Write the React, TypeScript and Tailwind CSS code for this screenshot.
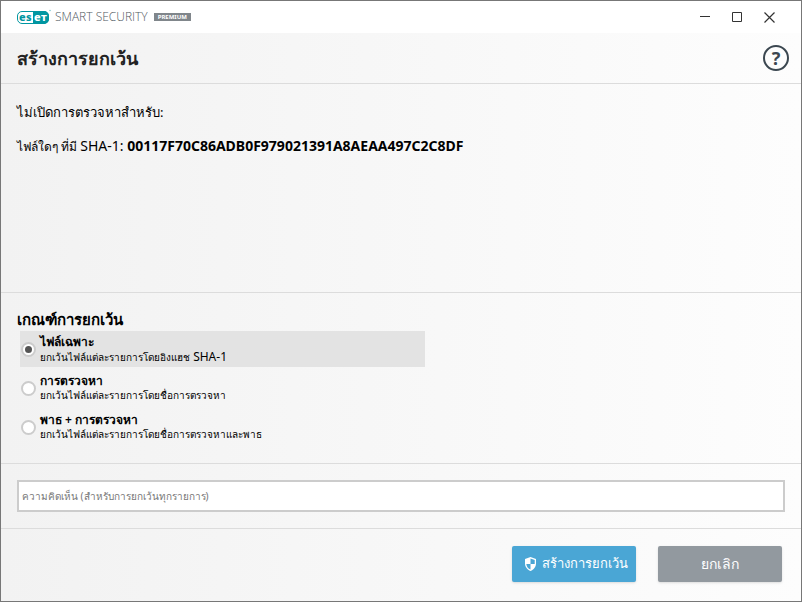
import { useState } from 'react';

const OPTIONS = [
    { id: 'file', title: 'ไฟล์เฉพาะ', text: 'ยกเว้นไฟล์แต่ละรายการโดยอิงแฮช', hash: 'SHA-1' },
    { id: 'detection', title: 'การตรวจหา', text: 'ยกเว้นไฟล์แต่ละรายการโดยชื่อการตรวจหา' },
    { id: 'path', title: 'พาธ + การตรวจหา', text: 'ยกเว้นไฟล์แต่ละรายการโดยชื่อการตรวจหาและพาธ' },
];

function Logo() {
    return (
        <svg width="34" height="16" viewBox="0 0 34 16" aria-label="eset">
            <rect x="0.5" y="2.5" width="31" height="12" rx="4.5" fill="#fff" stroke="#0096a1" />
            <path d="M16 2h11a5 5 0 0 1 5 5v3a5 5 0 0 1-5 5H16z" fill="#0096a1" />
            <text x="2" y="12" fontSize="11" fontWeight="800" fill="#0096a1">e</text>
            <text x="9" y="12" fontSize="11" fontWeight="800" fill="#0096a1">s</text>
            <text x="17" y="12" fontSize="11" fontWeight="800" fill="#fff">e</text>
            <text x="24" y="12" fontSize="11" fontWeight="800" fill="#fff">т</text>
            <circle cx="33" cy="1.5" r="0.8" fill="#7fc8ce" />
        </svg>
    );
}

function ShieldIcon() {
    return (
        <svg width="11" height="14" viewBox="0 0 11 14">
            <path d="M5.5 0 11 2v4.5c0 3.5-2.3 6.2-5.5 7.5C2.3 12.7 0 10 0 6.5V2z" fill="#fff" />
            <path d="M5.5 1.5V7h4.2V2.9zM5.5 7H1.3c.2 2.6 1.9 4.6 4.2 5.6z" fill="#4aa6d5" />
        </svg>
    );
}

function TitleBar() {
    return (
        <header className="flex h-8 shrink-0 items-center bg-white pl-4">
            <Logo />
            <span className="ml-1 font-['Open_Sans',sans-serif] text-xs font-light text-[#4f585e]">SMART SECURITY</span>
            <span className="ml-[6px] bg-[#80868b] px-1 text-[6px] leading-[8px] font-bold text-white">PREMIUM</span>
            <div className="ml-auto flex text-[#333]">
                <button aria-label="Minimize" className="flex h-8 w-8 items-center justify-center">
                    <svg width="10" height="10" stroke="currentColor"><path d="M0 4.5h10" /></svg>
                </button>
                <button aria-label="Maximize" className="flex h-8 w-8 items-center justify-center">
                    <svg width="10" height="10" stroke="currentColor" fill="none"><path d="M.5.5h9v9h-9z" /></svg>
                </button>
                <button aria-label="Close" className="mr-4 flex h-8 w-8 items-center justify-center">
                    <svg width="11" height="11" stroke="currentColor" strokeWidth="1.2"><path d="M.5.5l10 10M10.5.5l-10 10" /></svg>
                </button>
            </div>
        </header>
    );
}

export default function App() {
    const [selected, setSelected] = useState('file');

    return (
        <main className="flex min-h-screen flex-col border border-[#777] bg-linear-to-r from-[#f2f2f2] to-[#fdfdfd] font-['Noto_Sans',sans-serif] text-black">
            <TitleBar />

            <div className="flex h-[51px] shrink-0 items-center justify-between border-b border-[#dcdcdc] pr-3 pl-4">
                <h1 className="text-lg font-bold text-[#222]">สร้างการยกเว้น</h1>
                <button
                    aria-label="Help"
                    className="flex size-[26px] items-center justify-center rounded-full border-2 border-[#3b4750] text-lg leading-none font-bold text-[#3b4750]"
                >
                    ?
                </button>
            </div>

            <section className="flex-1 border-b border-[#dcdcdc] px-4 pt-4">
                <p className="text-[13px] leading-6">ไม่เปิดการตรวจหาสำหรับ:</p>
                <p className="mt-3 text-xs leading-5">
                    ไฟล์ใดๆ ที่มี{' '}
                    <span className="text-sm leading-5">
                        SHA-1: <b>00117F70C86ADB0F979021391A8AEAA497C2C8DF</b>
                    </span>
                </p>
            </section>

            <fieldset className="border-b border-[#dcdcdc] px-4 pt-4 pb-[18px]">
                <legend className="float-left w-full text-[15px] leading-5 font-semibold">เกณฑ์การยกเว้น</legend>
                <div className="clear-both flex w-[408px] max-w-full flex-col gap-[3px] pt-[2px] pl-[3px]">
                    {OPTIONS.map((option) => (
                        <label
                            key={option.id}
                            className="flex h-9 items-center gap-1 pl-px has-checked:bg-[#e3e3e3]"
                        >
                            <input
                                type="radio"
                                name="criteria"
                                checked={selected === option.id}
                                onChange={() => setSelected(option.id)}
                                className="grid size-[15px] appearance-none place-items-center rounded-full border-2 border-[#ccc] bg-white before:size-[7px] before:rounded-full checked:before:bg-[#555]"
                            />
                            <span className="flex flex-col text-[10px] leading-[15px]">
                                <b className="text-xs leading-[15px] font-semibold">{option.title}</b>
                                <span>
                                    {option.text}
                                    {option.hash && <span className="text-xs leading-[15px]"> {option.hash}</span>}
                                </span>
                            </span>
                        </label>
                    ))}
                </div>
            </fieldset>

            <div className="border-b border-[#dcdcdc] p-4">
                <input
                    type="text"
                    aria-label="ความคิดเห็น"
                    placeholder="ความคิดเห็น (สำหรับการยกเว้นทุกรายการ)"
                    className="h-8 w-full border-2 border-[#ccc] bg-white px-[3px] text-[10px] placeholder:text-[#777]"
                />
            </div>

            <footer className="flex h-[72px] shrink-0 items-start justify-end gap-[22px] pt-[17px] pr-[19px]">
                <button className="flex h-9 w-[124px] items-center justify-end gap-[6px] rounded-xs bg-[#4aa6d5] pr-2 text-[13px] text-white shadow-sm">
                    <ShieldIcon />
                    สร้างการยกเว้น
                </button>
                <button className="h-9 w-[124px] rounded-xs bg-[#92999f] text-sm text-white shadow-sm">ยกเลิก</button>
            </footer>
        </main>
    );
}
